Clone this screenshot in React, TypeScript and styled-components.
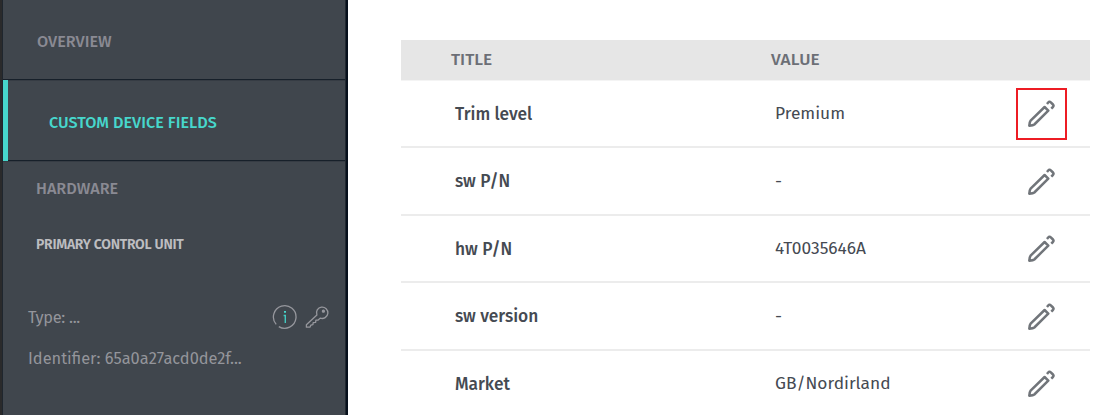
import React from 'react';
import styled, { createGlobalStyle } from 'styled-components';

const GlobalStyle = createGlobalStyle`
  * { box-sizing: border-box; }
  body {
    margin: 0;
    background: #fff;
    font-family: "Fira Sans", "Noto Sans", "Liberation Sans", sans-serif;
    overflow: hidden;
  }
`;

const Page = styled.div`
  display: flex;
  width: 1108px;
  height: 415px;
  overflow: hidden;
`;

const Sidebar = styled.aside`
  display: flex;
  flex-direction: column;
  width: 348px;
  flex: none;
  background: #40464d;
  border-left: 2px solid #2a2a2b;
  border-right: 2px solid #07101c;
  box-shadow: inset 1px 0 0 #1f262e, inset -1px 0 0 #20272f;
`;

const Text = styled.span<{ $track?: number }>`
  letter-spacing: ${(p) => (p.$track ? `${p.$track}px` : 'normal')};
  white-space: nowrap;
`;

const NavItem = styled.div<{ $active?: boolean }>`
  display: flex;
  align-items: center;
  height: ${(p) => (p.$active ? 81 : 80)}px;
  flex: none;
  margin: 0 1px;
  padding: ${(p) => (p.$active ? '3px 0 0 41px' : '2px 0 0 34px')};
  border-left: ${(p) => (p.$active ? '5px solid #47d7cc' : '0')};
  box-shadow: inset 0 -1px 0 #17202a, 0 1px 0 #363c44;
  color: ${(p) => (p.$active ? '#47d7cc' : '#8a8a93')};
  font-size: 16.2px;
  font-weight: 500;
`;

const SectionTitle = styled.div`
  padding: 17px 0 0 34px;
  color: #8a8a93;
  font-size: 16.2px;
  line-height: 22px;
  font-weight: 500;
`;

const UnitTitle = styled.div`
  padding: 35px 0 0 34px;
  color: #bdbdc0;
  font-size: 14px;
  line-height: 20px;
  font-weight: 600;
`;

const Detail = styled.div`
  display: flex;
  align-items: center;
  justify-content: space-between;
  height: 41px;
  padding: 0 17px 0 26px;
  color: #94959b;
  font-size: 16.4px;
  font-weight: 400;
`;

const Details = styled.div`
  padding-top: 42px;
`;

const IconGroup = styled.div`
  display: flex;
  align-items: center;
  gap: 7px;
  padding-bottom: 2px;
  svg { display: block; }
`;

const Main = styled.main`
  flex: none;
  width: 742px;
  padding: 40px 0 0 53px;
`;

const HeaderRow = styled.div`
  display: grid;
  grid-template-columns: 320px 1fr;
  align-items: center;
  height: 40px;
  margin-bottom: 0.5px;
  padding: 0 0 2px 50px;
  background: #e6e6e6;
  box-shadow: 0 1px 0 #f4f4f4;
  color: #6c6f76;
  font-size: 17.2px;
  font-weight: 500;
`;

const Row = styled.div`
  display: grid;
  grid-template-columns: 320px 1fr 50px;
  align-items: center;
  height: 67.5px;
  padding: 1px 24px 0 54px;
  border-bottom: 2px solid #ececec;
  color: #454a52;
  font-size: 17.35px;
`;

const Title = styled(Text)`
  padding-top: 1px;
  font-weight: 500;
`;

const EditButton = styled.button<{ $marked?: boolean }>`
  display: flex;
  align-items: center;
  justify-content: center;
  width: 51px;
  height: 52px;
  padding: 0;
  background: none;
  border: 2px solid ${(p) => (p.$marked ? '#ed1c24' : 'transparent')};
`;

const InfoIcon = () => (
  <svg width="26" height="26" viewBox="0 0 26 26" fill="none">
    <path d="M4.200 20.400A11.300 11.300 0 1 1 6.800 22.600" stroke="#96979d" strokeWidth="1.300" />
    <path d="M11.600 11.500h1.700v7.500" stroke="#43c8bf" strokeWidth="1.400" />
    <path d="M12 7h2v1.800h-2z" fill="#47d7cc" />
  </svg>
);

const KeyIcon = () => (
  <svg width="24" height="24" viewBox="0 0 24 24" fill="none" stroke="#96979d" strokeWidth="1.300" strokeLinejoin="round">
    <path d="M11.900 9.900A5.700 5.700 0 1 1 15.200 13.100L13.200 15l-2.300.2-.3 2.100-2.400.3-.3 2.100-2 .4L4.900 22.200H1.400V19.700Z" />
    <circle cx="18.400" cy="6.200" r="1" fill="#96979d" />
  </svg>
);

const PencilIcon = () => (
  <svg width="27" height="27" viewBox="0 0 27 27" fill="none" stroke="#71757a" strokeWidth="2.500" strokeLinejoin="round">
    <path d="M16.600 7L2.600 20.600Q1.700 21.600 1.300 25.700Q5.200 25.500 6.300 24.500L20.300 10.600Z" />
    <path d="M19 4L20.200 2.500Q21.500 1 22.800 2.300L25 4.500Q26.200 5.800 24.900 7L23.300 8.600" />
  </svg>
);

const rows = [
  { title: 'Trim level', value: 'Premium' },
  { title: 'sw P/N', value: '-' },
  { title: 'hw P/N', value: '4T0035646A' },
  { title: 'sw version', value: '-' },
  { title: 'Market', value: 'GB/Nordirland' },
];

export default function App() {
  return (
    <Page>
      <GlobalStyle />
      <Sidebar>
        <NavItem><Text>OVERVIEW</Text></NavItem>
        <NavItem $active><Text>CUSTOM DEVICE FIELDS</Text></NavItem>
        <SectionTitle><Text>HARDWARE</Text></SectionTitle>
        <UnitTitle><Text $track={-0.27}>PRIMARY CONTROL UNIT</Text></UnitTitle>
        <Details>
          <Detail>
            <Text $track={-0.3}>Type: ...</Text>
            <IconGroup><InfoIcon /><KeyIcon /></IconGroup>
          </Detail>
          <Detail><Text>Identifier: 65a0a27acd0de2f...</Text></Detail>
        </Details>
      </Sidebar>
      <Main>
        <HeaderRow>
          <Text>TITLE</Text>
          <Text $track={0.15}>VALUE</Text>
        </HeaderRow>
        {rows.map((row, i) => (
          <Row key={row.title}>
            <Title>{row.title}</Title>
            <Text>{row.value}</Text>
            <EditButton $marked={i === 0} aria-label={`Edit ${row.title}`}><PencilIcon /></EditButton>
          </Row>
        ))}
      </Main>
    </Page>
  );
}
